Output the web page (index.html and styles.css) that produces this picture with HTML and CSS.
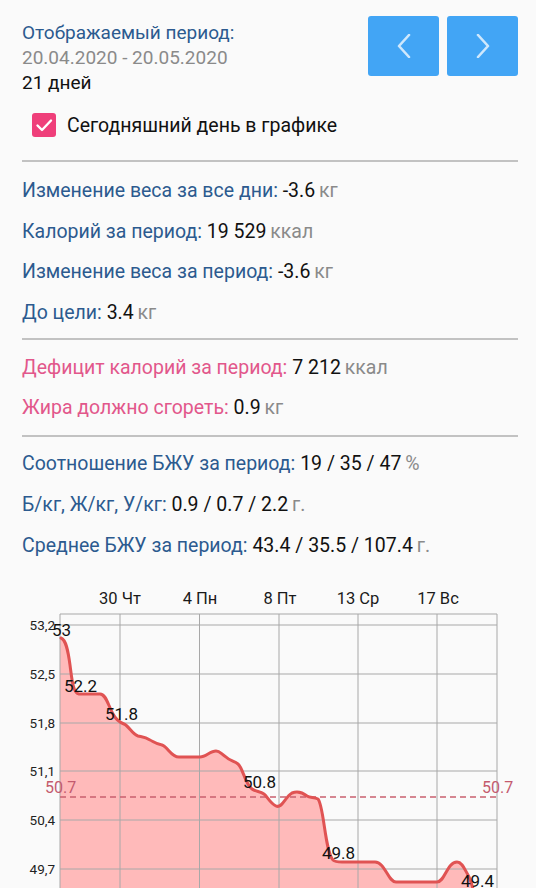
FILE: index.html
```html
<!DOCTYPE html>
<html lang="ru">
<head>
<meta charset="utf-8">
<title>Статистика</title>
<link rel="stylesheet" href="styles.css">
</head>
<body>
<div class="page">
  <div class="content">
    <header class="period">
      <div class="period-info">
        <div class="period-title">Отображаемый период:</div>
        <div class="period-dates">20.04.2020 - 20.05.2020</div>
        <div class="period-days">21 дней</div>
      </div>
      <div class="nav">
        <button class="nav-btn" aria-label="Назад">
          <svg width="14" height="24" viewBox="0 0 14 24"><path d="M12 1 L2 12 L12 23" fill="none" stroke="#cfe8fc" stroke-width="2.6" stroke-linecap="round" stroke-linejoin="round"/></svg>
        </button>
        <button class="nav-btn" aria-label="Вперёд">
          <svg width="14" height="24" viewBox="0 0 14 24"><path d="M2 1 L12 12 L2 23" fill="none" stroke="#cfe8fc" stroke-width="2.6" stroke-linecap="round" stroke-linejoin="round"/></svg>
        </button>
      </div>
    </header>
    <label class="today">
      <span class="check">
        <svg width="24" height="24" viewBox="0 0 24 24"><path d="M5.5 12.5 L10 17 L19 7.5" fill="none" stroke="#fff" stroke-width="2.4" stroke-linecap="round" stroke-linejoin="round"/></svg>
      </span>
      <span class="today-text">Сегодняшний день в графике</span>
    </label>

    <section class="stats s1">
      <div class="row"><span class="lbl">Изменение веса за все дни:</span> <span class="val">-3.6</span> <span class="unit">кг</span></div>
      <div class="row"><span class="lbl">Калорий за период:</span> <span class="val">19 529</span> <span class="unit">ккал</span></div>
      <div class="row"><span class="lbl">Изменение веса за период:</span> <span class="val">-3.6</span> <span class="unit">кг</span></div>
      <div class="row"><span class="lbl">До цели:</span> <span class="val">3.4</span> <span class="unit">кг</span></div>
    </section>

    <section class="stats s2">
      <div class="row"><span class="lbl pink">Дефицит калорий за период:</span> <span class="val">7 212</span> <span class="unit">ккал</span></div>
      <div class="row"><span class="lbl pink">Жира должно сгореть:</span> <span class="val">0.9</span> <span class="unit">кг</span></div>
    </section>

    <section class="stats s3">
      <div class="row"><span class="lbl">Соотношение БЖУ за период:</span> <span class="val">19 / 35 / 47</span> <span class="unit">%</span></div>
      <div class="row"><span class="lbl">Б/кг, Ж/кг, У/кг:</span> <span class="val">0.9 / 0.7 / 2.2</span> <span class="unit">г.</span></div>
      <div class="row"><span class="lbl">Среднее БЖУ за период:</span> <span class="val">43.4 / 35.5 / 107.4</span> <span class="unit">г.</span></div>
    </section>
  </div>

  <div class="chart">
    <svg class="chart-svg" width="536" height="318" viewBox="0 570 536 318">
      <g class="xlabels">
        <text x="120" y="604">30 Чт</text>
        <text x="200" y="604">4 Пн</text>
        <text x="280" y="604">8 Пт</text>
        <text x="358" y="604">13 Ср</text>
        <text x="438" y="604">17 Вс</text>
      </g>
      <path class="area" d="M60,638 L61,638 C66,640 68,650 70,665 C72,680 73,693 79,694 L100,694 C106,694 108,705 113,714 C116,720 119,722 124,724 C129,726 132,734 138,736 C142,737 145,737 150,740 C154,742 156,744 162,745 C168,747 171,757 179,757 L200,757 C206,757 210,751 216,751 C220,751 221,754 226,757 C230,761 234,761 238,764 C243,768 245,784 252,789 C256,792 260,791 264,794 C267,796 270,803 276,806 C282,809 285,797 292,793 C297,791 302,792 307,796 C310,798 314,797 318,799 C324,806 325,852 333,860 C335,862 338,862 342,862 L375,862 C385,862 388,882 396,882 L437,882 C445,882 447,862 457,862 C462,862 464,868 468,875 C471,880 472,886 474,892 L60,892 Z"/>
      <g class="grid">
        <line x1="60" y1="614" x2="497" y2="614"/>
        <line x1="60" y1="625" x2="497" y2="625"/>
        <line x1="60" y1="674" x2="497" y2="674"/>
        <line x1="60" y1="723" x2="497" y2="723"/>
        <line x1="60" y1="771" x2="497" y2="771"/>
        <line x1="60" y1="820" x2="497" y2="820"/>
        <line x1="60" y1="869" x2="497" y2="869"/>
        <line x1="60" y1="614" x2="60" y2="892"/>
        <line x1="120" y1="614" x2="120" y2="892"/>
        <line x1="199.5" y1="614" x2="199.5" y2="892"/>
        <line x1="279" y1="614" x2="279" y2="892"/>
        <line x1="358" y1="614" x2="358" y2="892"/>
        <line x1="437" y1="614" x2="437" y2="892"/>
        <line x1="497" y1="614" x2="497" y2="892"/>
      </g>
      <g class="ylabels">
        <text x="55" y="630">53,2</text>
        <text x="55" y="679">52,5</text>
        <text x="55" y="728">51,8</text>
        <text x="55" y="776">51,1</text>
        <text x="55" y="825">50,4</text>
        <text x="55" y="874">49,7</text>
      </g>
      <line class="goal" x1="60" y1="797" x2="497" y2="797"/>
      <text class="goal-label" x="45" y="793">50.7</text>
      <text class="goal-label" x="482" y="793">50.7</text>
      <path class="curve" d="M61,638 C66,640 68,650 70,665 C72,680 73,693 79,694 L100,694 C106,694 108,705 113,714 C116,720 119,722 124,724 C129,726 132,734 138,736 C142,737 145,737 150,740 C154,742 156,744 162,745 C168,747 171,757 179,757 L200,757 C206,757 210,751 216,751 C220,751 221,754 226,757 C230,761 234,761 238,764 C243,768 245,784 252,789 C256,792 260,791 264,794 C267,796 270,803 276,806 C282,809 285,797 292,793 C297,791 302,792 307,796 C310,798 314,797 318,799 C324,806 325,852 333,860 C335,862 338,862 342,862 L375,862 C385,862 388,882 396,882 L437,882 C445,882 447,862 457,862 C462,862 464,868 468,875 C471,880 472,886 474,892"/>
      <g class="vlabels">
        <text x="52" y="636">53</text>
        <text x="64" y="692">52.2</text>
        <text x="105" y="720">51.8</text>
        <text x="243" y="788">50.8</text>
        <text x="322" y="859">49.8</text>
        <text x="461" y="887">49.4</text>
      </g>
    </svg>
  </div>
</div>
</body>
</html>
```

FILE: styles.css
```css
html, body {
  margin: 0;
  padding: 0;
  background: #fafafa;
}

body {
  font-family: Roboto, "Noto Sans", "Liberation Sans", sans-serif;
  font-size: 19.5px;
  color: #151515;
  width: 536px;
  height: 888px;
  overflow: hidden;
}

.content {
  padding: 16px 18px 0 22px;
}

.period {
  display: flex;
  justify-content: space-between;
  align-items: flex-start;
}

.period-info {
  padding-top: 4px;
  line-height: 25px;
  font-size: 19px;
}

.period-title {
  color: #2c5a8f;
}

.period-dates {
  color: #8a8a8a;
}

.period-days {
  color: #111;
}

.nav {
  display: flex;
  gap: 8px;
}

.nav-btn {
  width: 71px;
  height: 60px;
  border: none;
  border-radius: 3px;
  background: #42a5f5;
  display: flex;
  align-items: center;
  justify-content: center;
  padding: 0;
  margin: 0;
}

.today {
  display: flex;
  align-items: center;
  gap: 11px;
  height: 24px;
  margin: 18px 0 0 10px;
}

.check {
  width: 24px;
  height: 24px;
  border-radius: 3px;
  background: #ef3f7a;
  display: flex;
}

.today-text {
  color: #111;
}

.stats {
  border-top: 2px solid #c2c2c2;
  display: flex;
  flex-direction: column;
}

.s1 {
  margin-top: 23px;
  padding: 17px 0 13.5px;
  gap: 16.5px;
}

.s2 {
  padding: 16px 0 15px;
  gap: 16px;
}

.s3 {
  padding: 15px 0 12px;
  gap: 17px;
}

.row {
  line-height: 24px;
  height: 24px;
  white-space: nowrap;
}

.lbl {
  color: #2c5a8f;
}

.lbl.pink {
  color: #e2578b;
}

.val {
  color: #111;
}

.unit {
  color: #8a8a8a;
  margin-left: -1px;
}

.chart {
  height: 318px;
}

.chart-svg {
  display: block;
  font-family: Roboto, "Noto Sans", "Liberation Sans", sans-serif;
}

.xlabels text {
  font-size: 16.5px;
  fill: #1a1a1a;
  text-anchor: middle;
}

.ylabels text {
  font-size: 13.5px;
  fill: #222;
  text-anchor: end;
}

.grid line {
  stroke: #a8a8a8;
  stroke-width: 1;
}

.area {
  fill: #ffbaba;
}

.curve {
  fill: none;
  stroke: #e05353;
  stroke-width: 3;
  stroke-linejoin: round;
  stroke-linecap: round;
}

.goal {
  stroke: #c9606f;
  stroke-width: 1.3;
  stroke-dasharray: 6 4;
}

.goal-label {
  font-size: 16px;
  fill: #c45a6e;
}

.vlabels text {
  font-size: 17px;
  fill: #111;
}
```
